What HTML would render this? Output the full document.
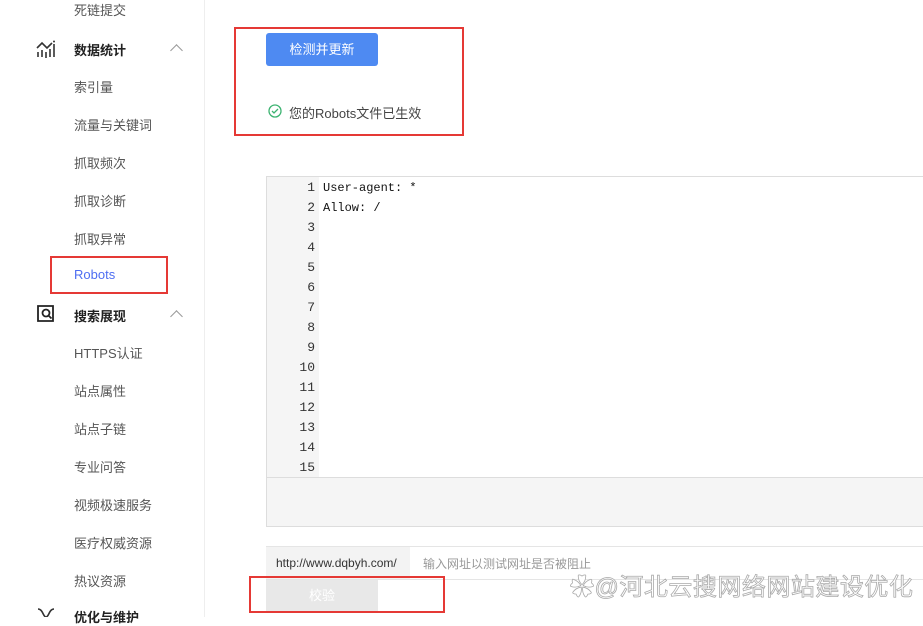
<!DOCTYPE html>
<html><head><meta charset="utf-8"><style>
*{margin:0;padding:0;box-sizing:border-box}
body{width:923px;height:617px;overflow:hidden;background:#fff;font-family:"Liberation Sans","Noto Sans CJK SC",sans-serif;font-size:13px;color:#555;position:relative}
.a{position:absolute}
.side{left:0;top:0;width:205px;height:617px;border-right:1px solid #eee}
.it{left:74px;font-size:13px;color:#555}
.h{left:74px;font-size:13px;color:#222;font-weight:bold}
.car{left:172px;width:9px;height:9px;border-left:1.5px solid #999;border-top:1.5px solid #999;transform:rotate(45deg)}
.red{border:2px solid #e53935}
.ln{width:52px;text-align:right;padding-right:4px;font-family:"Liberation Mono",monospace;font-size:13px;color:#333;line-height:20px}
</style></head><body>
<div class="a side"></div>
<div class="a it" style="top:0px">死链提交</div>
<svg class="a" style="left:36px;top:40px" width="20" height="18" viewBox="0 0 20 18" fill="none" stroke="#333" stroke-width="1.6"><path d="M1 8 L6 3 L11 8 L16 3"/><path d="M2 12v5M6 10v7M10 12v7M14 9v8M18 4v13"/><circle cx="18" cy="1.5" r="1" fill="#333" stroke="none"/></svg>
<div class="a h" style="top:40px">数据统计</div><div class="a car" style="top:46px"></div>
<div class="a it" style="top:77px">索引量</div>
<div class="a it" style="top:115px">流量与关键词</div>
<div class="a it" style="top:153px">抓取频次</div>
<div class="a it" style="top:191px">抓取诊断</div>
<div class="a it" style="top:229px">抓取异常</div>
<div class="a it" style="top:267px;color:#4e6ef2">Robots</div>
<div class="a red" style="left:50px;top:256px;width:118px;height:38px"></div>
<svg class="a" style="left:36px;top:304px" width="20" height="20" viewBox="0 0 20 20" fill="none" stroke="#222" stroke-width="1.8"><path d="M2 2h15v15H2z"/><circle cx="10" cy="9" r="3.5"/><path d="M12.5 11.5l3 3"/></svg>
<div class="a h" style="top:306px">搜索展现</div><div class="a car" style="top:312px"></div>
<div class="a it" style="top:343px">HTTPS认证</div>
<div class="a it" style="top:381px">站点属性</div>
<div class="a it" style="top:419px">站点子链</div>
<div class="a it" style="top:457px">专业问答</div>
<div class="a it" style="top:495px">视频极速服务</div>
<div class="a it" style="top:533px">医疗权威资源</div>
<div class="a it" style="top:571px">热议资源</div>
<div class="a h" style="top:607px">优化与维护</div>
<svg class="a" style="left:36px;top:607px" width="20" height="10"><path d="M2 2c5 0 5 8 8 8s3-8 8-8" stroke="#333" fill="none" stroke-width="1.6"/></svg>

<div class="a" style="left:266px;top:33px;width:112px;height:33px;background:#4e8af2;border-radius:3px;color:#fff;text-align:center;line-height:33px;font-size:13px">检测并更新</div>
<svg class="a" style="left:268px;top:104px" width="14" height="14"><circle cx="7" cy="7" r="6" fill="none" stroke="#3cb371" stroke-width="1.3"/><path d="M4 7l2 2 4-4" fill="none" stroke="#3cb371" stroke-width="1.3"/></svg>
<div class="a" style="left:289px;top:103px;color:#444">您的Robots文件已生效</div>
<div class="a red" style="left:234px;top:27px;width:230px;height:109px"></div>

<div class="a" style="left:266px;top:176px;width:670px;height:351px;border:1px solid #ddd;background:#fff"></div>
<div class="a" style="left:267px;top:177px;width:52px;height:301px;background:#f5f5f5;padding-top:1px">
<div class="ln">1</div><div class="ln">2</div><div class="ln">3</div><div class="ln">4</div><div class="ln">5</div><div class="ln">6</div><div class="ln">7</div><div class="ln">8</div><div class="ln">9</div><div class="ln">10</div><div class="ln">11</div><div class="ln">12</div><div class="ln">13</div><div class="ln">14</div><div class="ln">15</div></div>
<div class="a" style="left:323px;top:178px;font-family:'Liberation Mono',monospace;font-size:12px;line-height:20px;color:#111">User-agent: *<br>Allow: /</div>
<div class="a" style="left:267px;top:477px;width:670px;height:49px;background:#f5f5f5;border-top:1px solid #ddd"></div>

<div class="a" style="left:266px;top:546px;width:670px;height:34px;border-top:1px solid #e5e5e5;border-bottom:1px solid #e5e5e5"></div>
<div class="a" style="left:266px;top:547px;width:144px;height:32px;background:#f3f3f3;line-height:32px;padding-left:10px;color:#333;font-size:12px">http://www.dqbyh.com/</div>
<div class="a" style="left:423px;top:555px;color:#999;font-size:12px">输入网址以测试网址是否被阻止</div>
<div class="a" style="left:266px;top:580px;width:112px;height:32px;background:#e8e8e8;color:#fff;text-align:center;line-height:32px">校验</div>
<div class="a red" style="left:249px;top:576px;width:196px;height:37px"></div>
<div class="a" style="left:570px;top:567px;font-size:24px;letter-spacing:0.5px;color:#fff;-webkit-text-stroke:0.8px #aaa">✿@河北云搜网络网站建设优化</div>
</body></html>
